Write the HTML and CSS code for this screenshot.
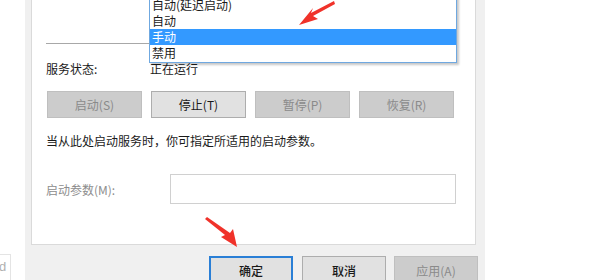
FILE: index.html
```html
<!DOCTYPE html>
<html lang="zh-CN">
<head>
<meta charset="utf-8">
<link rel="stylesheet" href="styles.css">
</head>
<body>
<div class="page">
  <div class="left-strip">
    <div class="stub">d</div>
  </div>
  <div class="dialog">
    <div class="panel">
      <div class="divider"></div>
      <div class="row status-row">
        <span class="label">服务状态:</span>
        <span class="value">正在运行</span>
      </div>
      <div class="btn-row">
        <div class="btn disabled">启动(S)</div>
        <div class="btn">停止(T)</div>
        <div class="btn disabled">暂停(P)</div>
        <div class="btn disabled">恢复(R)</div>
      </div>
      <div class="hint">当从此处启动服务时，你可指定所适用的启动参数。</div>
      <div class="row param-row">
        <span class="label muted">启动参数(M):</span>
        <div class="input"></div>
      </div>
      <div class="dropdown">
        <div class="item">自动(延迟启动)</div>
        <div class="item">自动</div>
        <div class="item selected">手动</div>
        <div class="item">禁用</div>
      </div>
      <svg class="arrow arrow-top" width="40" height="30" viewBox="0 0 40 30">
        <path d="M37 1 L14 13 L16 8 L2 25 L21 19 L16 16 L38 4 Z" fill="#f0322a"/>
      </svg>
    </div>
    <div class="footer">
      <div class="fbtn primary">确定</div>
      <div class="fbtn">取消</div>
      <div class="fbtn disabled">应用(A)</div>
    </div>
    <svg class="arrow arrow-bottom" width="40" height="32" viewBox="0 0 40 32">
      <path d="M2 2 L22 18 L18 20 L34 30 L30 12 L27 16 L4 0 Z" fill="#f0322a"/>
    </svg>
  </div>
  <div class="right-space"></div>
</div>
</body>
</html>
```

FILE: styles.css
```css
* { box-sizing: border-box; }
html, body {
  margin: 0;
  padding: 0;
  background: #ffffff;
  width: 600px;
  height: 280px;
  overflow: hidden;
}
body {
  font-family: "Noto Sans CJK SC", "Noto Sans", sans-serif;
  font-size: 12px;
  color: #1a1a1a;
}
.page {
  display: flex;
  height: 280px;
}
.left-strip {
  width: 25px;
  flex-shrink: 0;
  display: flex;
  flex-direction: column;
  justify-content: flex-end;
}
.stub {
  width: 11px;
  height: 26px;
  border: 1px solid #e4e4e4;
  border-left: none;
  border-bottom: none;
  color: #b0b0b0;
  font-family: "Liberation Sans", sans-serif;
  font-size: 13px;
  line-height: 16px;
  padding-top: 4px;
  overflow: hidden;
  text-indent: -1px;
}
.dialog {
  position: relative;
  width: 460px;
  flex-shrink: 0;
  background: #f0f0f0;
  padding: 0 9px 0 6px;
  display: flex;
  flex-direction: column;
}
.panel {
  position: relative;
  width: 445px;
  height: 245px;
  flex-shrink: 0;
  background: #ffffff;
  border: 1px solid #dadada;
  border-top: none;
  padding: 0 0 0 14px;
  display: flex;
  flex-direction: column;
}
.divider {
  margin-top: 43px;
  width: 410px;
  height: 1px;
  background: #a8a8a8;
}
.row {
  display: flex;
  align-items: center;
}
.status-row {
  margin-top: 16px;
  height: 16px;
}
.status-row .label {
  width: 104px;
}
.btn-row {
  margin-top: 15px;
  display: flex;
  gap: 9px;
  margin-left: 1px;
}
.btn {
  width: 95px;
  height: 27px;
  flex-shrink: 0;
  border: 1px solid #adadad;
  background: #e1e1e1;
  display: flex;
  align-items: center;
  justify-content: center;
  color: #1a1a1a;
}
.btn.disabled {
  background: #cccccc;
  border-color: #bfbfbf;
  color: #8a8a8a;
}
.hint {
  margin-top: 15px;
  height: 16px;
  line-height: 16px;
}
.param-row {
  margin-top: 25px;
  height: 30px;
}
.label.muted {
  color: #8d8d8d;
  width: 124px;
}
.input {
  width: 286px;
  height: 30px;
  border: 1px solid #d0d0d0;
  background: #ffffff;
}
.dropdown {
  position: absolute;
  left: 117px;
  top: -4px;
  width: 308px;
  border: 1px solid #6fa8e0;
  background: #ffffff;
  box-shadow: 2px 2px 2px rgba(0,0,0,0.22);
  padding-bottom: 1px;
}
.item {
  height: 16px;
  line-height: 16px;
  padding-left: 2px;
  color: #1a1a1a;
}
.item.selected {
  background: #3399ff;
  color: #ffffff;
}
.arrow {
  position: absolute;
}
.arrow-top {
  left: 265px;
  top: 0px;
}
.arrow-bottom {
  left: 178px;
  top: 217px;
}
.footer {
  margin-top: 11px;
  display: flex;
  padding-left: 178px;
}
.fbtn {
  width: 84px;
  height: 30px;
  flex-shrink: 0;
  border: 1px solid #adadad;
  background: #e1e1e1;
  display: flex;
  align-items: flex-start;
  justify-content: center;
  padding-top: 5px;
  color: #1a1a1a;
  margin-right: 8px;
  font-weight: 500;
}
.fbtn.primary {
  width: 84px;
  border: 2px solid #2a7fd6;
  padding-top: 4px;
  margin-right: 9px;
}
.fbtn.disabled {
  background: #cccccc;
  border-color: #bfbfbf;
  color: #8a8a8a;
  font-weight: 400;
}
.right-space {
  flex: 1;
}
```
